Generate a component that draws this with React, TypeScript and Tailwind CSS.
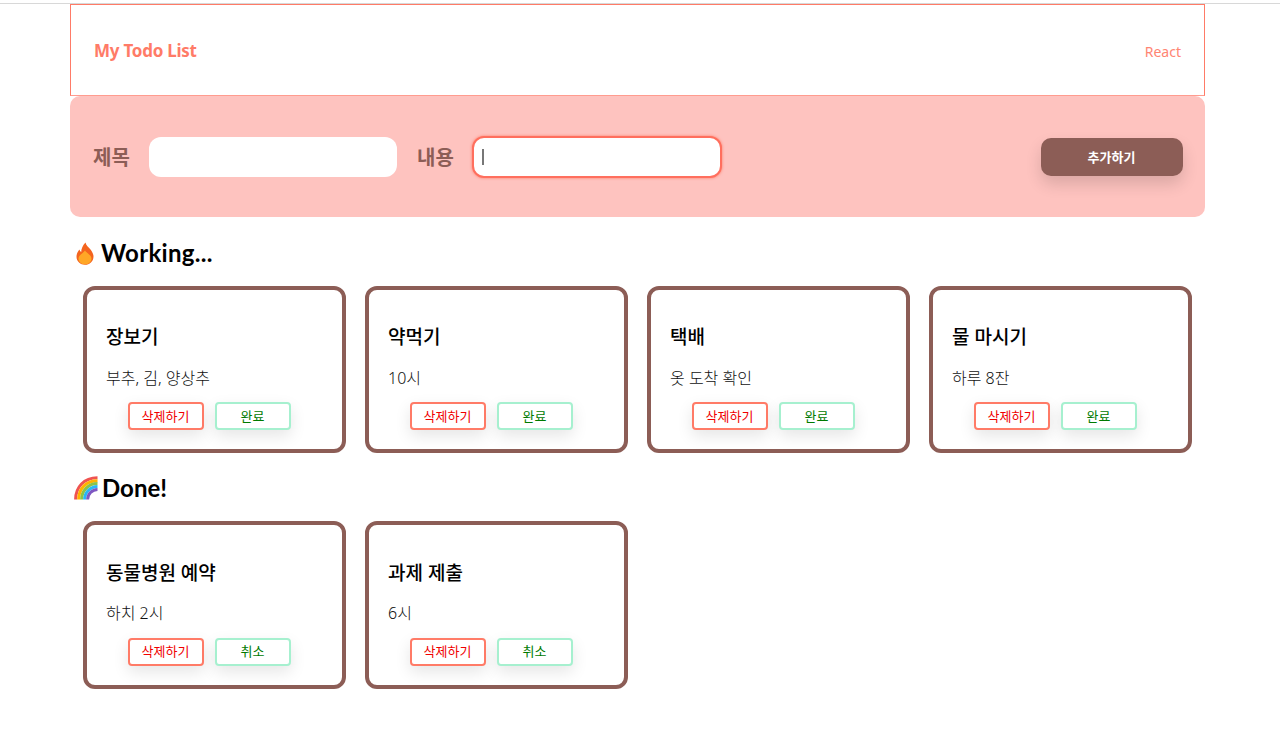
const font = '[font-family:"Noto_Sans","Noto_Sans_CJK_KR",sans-serif]';
const cjk = '[font-family:"Noto_Sans_CJK_KR","Noto_Sans",sans-serif]';
const heading = '[font-family:"Lato","Noto_Sans_CJK_KR",sans-serif]';

function Flame() {
  return (
    <svg width="18" height="23" viewBox="0 0 18 23" className="shrink-0">
      <path d="M9.500 0.500C10 3.500 12.500 5 14.500 7.500C16.500 10 17.500 12.500 17.500 14.500C17.500 19.500 13.500 22.800 9 22.800C4.500 22.800 0.500 19.500 0.500 14.800C0.500 11.500 2 9 3.500 7.500C3.800 8.800 4.300 9.500 5.200 10C5.200 6.500 7 3 9.500 0.500Z" fill="#f4641e" />
      <path d="M9 8.500C10 10.500 15.500 13 15.500 16.500C15.500 20 12.500 22.300 9 22.300C5.500 22.300 2.500 20 2.500 16.500C2.500 13 7.500 11 9 8.500Z" fill="#ffa726" />
    </svg>
  );
}

function Rainbow() {
  return (
    <svg width="24" height="24" viewBox="0 0 24 24" fill="none" className="shrink-0">
      <path d="M1.600 23.500C1.600 11 10 1.800 23.500 1.800" stroke="#ef5350" strokeWidth="3" />
      <path d="M4.600 23.500C4.600 13 12 4.700 23.500 4.700" stroke="#ffb300" strokeWidth="3" />
      <path d="M7.600 23.500C7.600 15 14 7.600 23.500 7.600" stroke="#8bc34a" strokeWidth="3" />
      <path d="M10.600 23.500C10.600 17 16 10.500 23.500 10.500" stroke="#29b6f6" strokeWidth="3" />
      <path d="M13.600 23.500C13.600 18.500 18 13.400 23.500 13.400" stroke="#7e57c2" strokeWidth="3" />
    </svg>
  );
}

type Todo = { title: string; body: string };

function Card({ todo, action }: { todo: Todo; action: string }) {
  return (
    <div className="flex h-[167.6px] w-[263px] flex-col rounded-xl border-4 border-[#8c5d56] bg-white">
      <h3 className="mt-[34.7px] h-[26px] pl-[19px] text-[19px] leading-[26px] font-medium text-black">{todo.title}</h3>
      <p className="mt-[15.300px] h-[24px] pl-[19px] text-[16px] leading-[24px] font-light text-[#111]">{todo.body}</p>
      <div className="mt-[12.600px] flex gap-[11px] pl-[41px]">
        <button className="h-[28px] w-[76px] rounded border-2 border-[#ff7b67] bg-white pr-[1px] text-[13px] leading-none font-normal text-[#f00000] shadow-[0_6px_16px_rgba(0,0,0,0.1)]">삭제하기</button>
        <button className="h-[28px] w-[76px] rounded border-2 border-[#a6f0cf] bg-white pr-[1px] text-[13px] leading-none font-normal text-[#007a00] shadow-[0_6px_16px_rgba(0,0,0,0.1)]">{action}</button>
      </div>
    </div>
  );
}

const working: Todo[] = [
  { title: "장보기", body: "부추, 김, 양상추" },
  { title: "약먹기", body: "10시" },
  { title: "택배", body: "옷 도착 확인" },
  { title: "물 마시기", body: "하루 8잔" },
];

const done: Todo[] = [
  { title: "동물병원 예약", body: "하치 2시" },
  { title: "과제 제출", body: "6시" },
];

export default function App() {
  return (
    <div className={`min-h-[746px] bg-white pt-[3px] ${font}`}>
      <div className="border-t border-[#d8d8d8]">
        <div className="ml-[70px] w-[1135px]">
          <header className="flex h-[92px] items-center justify-between border border-[#ff7b67] border-b-[#ff9c8f] pt-[1px] pr-[23px] pl-[23px]">
            <span className="pt-[1px] text-[17px] font-bold tracking-[-0.25px] text-[#ff7b67]">My Todo List</span>
            <span className="pt-[1px] text-[14px] font-normal text-[#ff8573]">React</span>
          </header>
          <form className={`flex h-[121px] items-center rounded-[10px] bg-[#fec3bf] pr-[22px] pl-[23px] ${cjk}`}>
            <label className="w-[56px] text-[20px] font-semibold text-[#8c5d56]">제목</label>
            <div className="h-[40px] w-[248px] rounded-xl bg-white" />
            <label className="ml-[20px] w-[55px] text-[20px] font-semibold text-[#8c5d56]">내용</label>
            <div className="flex h-[42px] w-[250px] items-center rounded-xl border-2 border-[#ff6f5e] bg-white pl-[8px] shadow-[0_0_3px_#ff7b67]">
              <div className="h-[16px] w-[2px] bg-[#777]" />
            </div>
            <button type="button" className="ml-auto h-[38px] w-[142px] rounded-[10px] bg-[#8c5d56] pr-[1px] text-[13px] font-bold text-white shadow-[0_8px_16px_rgba(0,0,0,0.14)]">추가하기</button>
          </form>
          <h2 className={`mt-[19px] flex h-[34px] items-center pl-[6px] text-[24px] font-bold text-black ${heading}`}><Flame /><span className="ml-[7px] tracking-[0.3px]">Working...</span></h2>
          <div className="mt-[15.800px] flex gap-[19px] pl-[13px]">
            {working.map((t) => <Card key={t.title} todo={t} action="완료" />)}
          </div>
          <h2 className={`mt-[17.900px] flex h-[34px] items-center pl-[4px] text-[24px] font-bold text-black ${heading}`}><Rainbow /><span className="ml-[4px]">Done!</span></h2>
          <div className="mt-[16px] flex gap-[19px] pl-[13px]">
            {done.map((t) => <Card key={t.title} todo={t} action="취소" />)}
          </div>
        </div>
      </div>
    </div>
  );
}
